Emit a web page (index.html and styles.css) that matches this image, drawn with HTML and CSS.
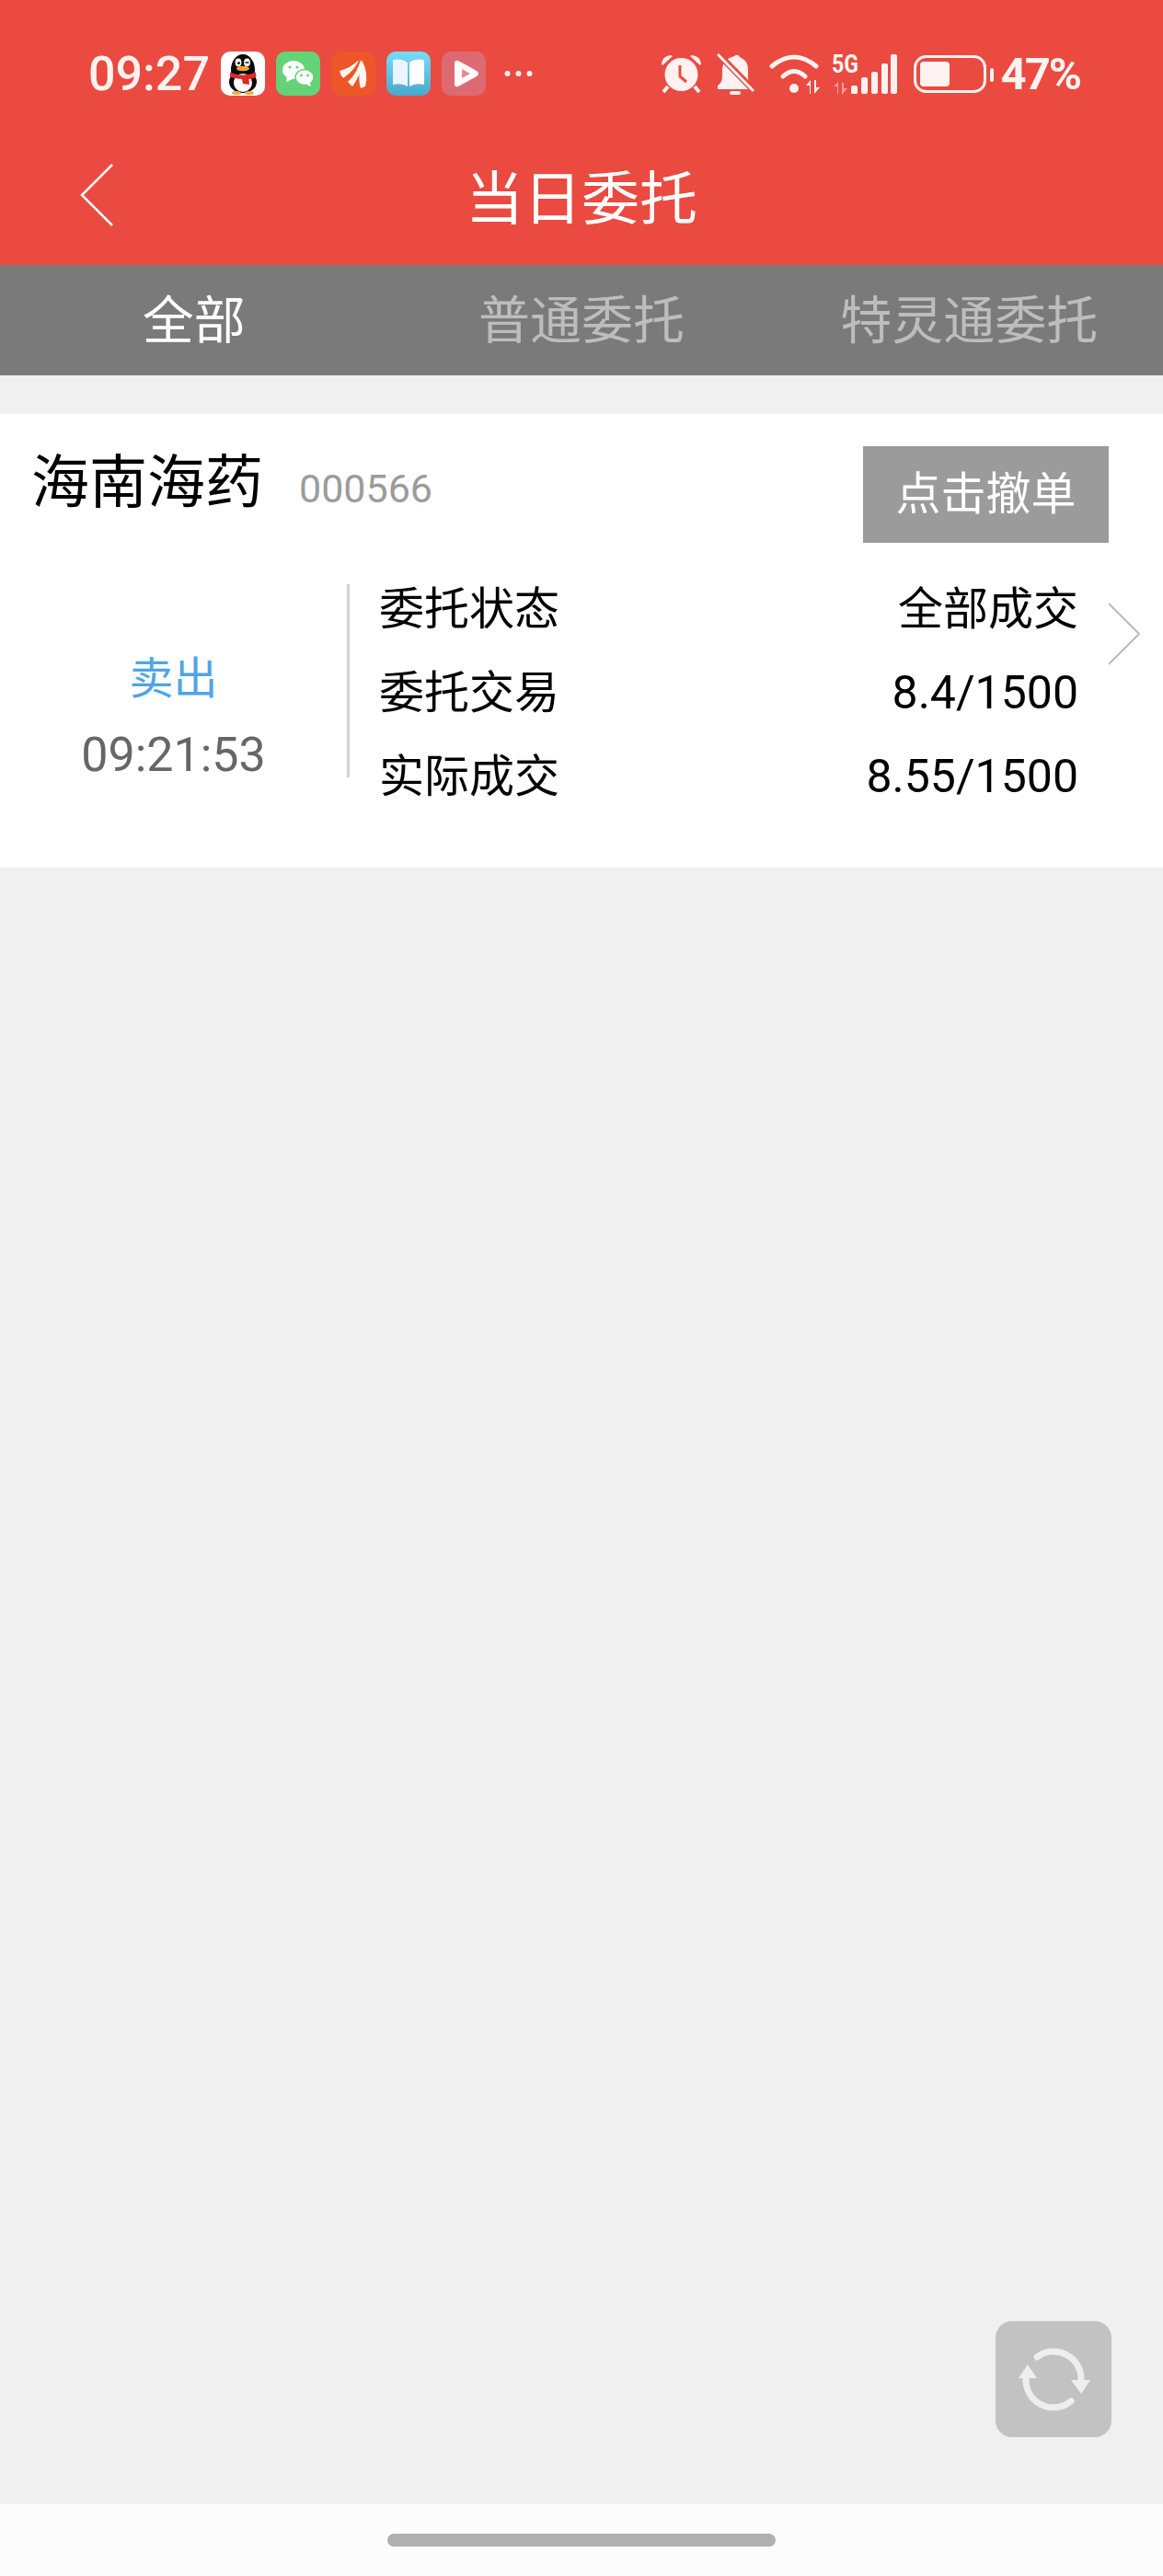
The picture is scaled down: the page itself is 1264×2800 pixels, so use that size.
FILE: index.html
```html
<!DOCTYPE html>
<html lang="zh-CN">

<head>
    <meta charset="UTF-8">
    <meta name="viewport" content="width=device-width, initial-scale=1.0">
    <title>当日委托</title>
    <link rel="stylesheet" href="styles.css">
</head>

<body>
    <div id="page">
        <header id="topBar">
            <div id="statusBar">
                <span class="clock">09:27</span>
                <div class="appIcons">
                    <svg class="appIcon" viewBox="0 0 48 48">
                        <rect width="48" height="48" rx="10" fill="#fff"/>
                        <ellipse cx="24" cy="20" rx="13" ry="17" fill="#0b0b0b"/>
                        <ellipse cx="24" cy="33" rx="15" ry="12" fill="#0b0b0b"/>
                        <ellipse cx="24" cy="34" rx="10" ry="10" fill="#fff"/>
                        <ellipse cx="19" cy="12" rx="3.4" ry="4.4" fill="#fff"/>
                        <ellipse cx="28.500" cy="12" rx="3.400" ry="4.400" fill="#fff"/>
                        <circle cx="19.500" cy="12.500" r="1.500" fill="#111"/>
                        <path d="M26.500 12h4" stroke="#111" stroke-width="1.500"/>
                        <ellipse cx="24" cy="18.500" rx="7" ry="2.800" fill="#f0a92c"/>
                        <path d="M10 22.500q14 6 28 0l.5 5q-4 2.500-8 2.500l.5 6-7-1-1-5q-7 0-13-2.500z" fill="#dc2a25"/>
                        <ellipse cx="17" cy="45" rx="5" ry="2" fill="#f0b040"/>
                        <ellipse cx="31" cy="45" rx="5" ry="2" fill="#f0b040"/>
                    </svg>
                    <svg class="appIcon" viewBox="0 0 48 48">
                        <rect width="48" height="48" rx="10" fill="#64d277"/>
                        <ellipse cx="19" cy="20" rx="12" ry="10" fill="#fff"/>
                        <path d="M12 27l-1 6 7-3z" fill="#fff"/>
                        <ellipse cx="31" cy="28" rx="10" ry="8.500" fill="#fff" stroke="#64d277" stroke-width="1.500"/>
                        <path d="M37 34l1 4-5-2z" fill="#fff"/>
                        <circle cx="15" cy="17" r="1.600" fill="#64d277"/>
                        <circle cx="23" cy="17" r="1.600" fill="#64d277"/>
                        <circle cx="27.500" cy="26" r="1.400" fill="#64d277"/>
                        <circle cx="34.500" cy="26" r="1.400" fill="#64d277"/>
                    </svg>
                    <svg class="appIcon" viewBox="0 0 48 48">
                        <rect width="48" height="48" rx="10" fill="#ec5628"/>
                        <path d="M9 21q12-3 21-12-3 10-17 20q-3-3-4-8z" fill="#fff5ef"/>
                        <path d="M18 33q10-9 14-24 3 12-9 29z" fill="#fff5ef"/>
                        <path d="M32 40q-4-12 1-31 8 14 4 29z" fill="#fff5ef"/>
                    </svg>
                    <svg class="appIcon" viewBox="0 0 48 48">
                        <defs>
                            <linearGradient id="bookBg" x1="0" y1="0" x2="0" y2="1">
                                <stop offset="0" stop-color="#78dcf8"/>
                                <stop offset="1" stop-color="#48a9cc"/>
                            </linearGradient>
                        </defs>
                        <rect width="48" height="48" rx="10" fill="url(#bookBg)"/>
                        <path d="M7 9q10-2 16 3v26q-6-4-16-2z" fill="#eaf6fb"/>
                        <path d="M41 9q-10-2-16 3v26q6-4 16-2z" fill="#fff"/>
                    </svg>
                    <svg class="appIcon" viewBox="0 0 48 48">
                        <rect width="48" height="48" rx="10" fill="#dd6a72"/>
                        <path d="M14 13q0-4 4-3l20 11q4 3 0 6l-20 11q-4 1-4-3z" fill="#fff"/>
                        <path d="M22 19v10l9-5z" fill="#e68a90"/>
                    </svg>
                </div>
                <svg class="moreDots" viewBox="0 0 31 8">
                    <circle cx="3.500" cy="4" r="3" fill="#fff2f0"/>
                    <circle cx="15.500" cy="4" r="3" fill="#fff2f0"/>
                    <circle cx="27.500" cy="4" r="3" fill="#fff2f0"/>
                </svg>
                <div class="sysIcons">
                    <svg class="alarmIcon" viewBox="0 0 45 44">
                        <circle cx="22.500" cy="23" r="18" fill="#fff2f0"/>
                        <path d="M1 11q1-8 10-9l2 1-11 10z" fill="#fff2f0"/>
                        <path d="M44 11q-1-8-10-9l-2 1 11 10z" fill="#fff2f0"/>
                        <path d="M8 36l-5 6M37 36l5 6" stroke="#fff2f0" stroke-width="4"/>
                        <path d="M21 13v12l7 6" fill="none" stroke="#ea4a40" stroke-width="3"/>
                    </svg>
                    <svg class="bellIcon" viewBox="0 0 41 45">
                        <path d="M19 3q4-3 6 1 8 3 9 12v10q0 6 5 10v3H1v-4q5-3 5-10V16q1-10 13-13z" fill="#fff2f0"/>
                        <rect x="14" y="41" width="12" height="4" rx="2" fill="#fff2f0"/>
                        <path d="M0 -1L41 41" stroke="#ea4a40" stroke-width="7"/>
                        <path d="M1 1L40 41" stroke="#fff2f0" stroke-width="3"/>
                    </svg>
                    <svg class="wifiIcon" viewBox="0 0 56 43">
                        <path d="M3 13Q27 -7 51 13" fill="none" stroke="#fff2f0" stroke-width="5" stroke-linecap="round"/>
                        <path d="M15 24Q27 13 39 24" fill="none" stroke="#fff2f0" stroke-width="5" stroke-linecap="round"/>
                        <circle cx="27" cy="37" r="5" fill="#fff2f0"/>
                        <path d="M44 43V34h-4l5-6v15zM49 28v15l6-7h-4v-8z" fill="#fff2f0"/>
                    </svg>
                    <svg class="signalIcon" viewBox="0 -8 72 53">
                        <text class="netLabel" x="0" y="21" textLength="29" lengthAdjust="spacingAndGlyphs">5G</text>
                        <path d="M6 44V36H2l5-5v13zM11 32v13l6-7h-4v-6z" fill="#f6a29b"/>
                        <rect x="21" y="35" width="7" height="9" rx="1.500" fill="#fff2f0"/>
                        <rect x="32" y="26" width="7" height="18" rx="2" fill="#fff2f0"/>
                        <rect x="43" y="20" width="7" height="24" rx="2" fill="#fff2f0"/>
                        <rect x="54" y="11" width="7" height="33" rx="2" fill="#fff2f0"/>
                        <rect x="64" y="1" width="7" height="43" rx="2" fill="#fff2f0"/>
                    </svg>
                    <svg class="batteryIcon" viewBox="0 0 87 41">
                        <rect x="1.500" y="1.500" width="76" height="38" rx="12" fill="none" stroke="#fff2f0" stroke-width="3"/>
                        <rect x="7" y="7" width="32" height="27" rx="4" fill="#fff2f0"/>
                        <rect x="83" y="14" width="4" height="15" rx="2" fill="#fff2f0"/>
                    </svg>
                    <span class="percent">47%</span>
                </div>
            </div>
            <div id="navBar">
                <svg class="backArrow" viewBox="0 0 36 68">
                    <path d="M35 1L2 34l33 33" fill="none" stroke="#fff" stroke-width="2.500"/>
                </svg>
                <h1>当日委托</h1>
            </div>
        </header>

        <nav id="tabs">
            <div class="tab active">全部</div>
            <div class="tab">普通委托</div>
            <div class="tab">特灵通委托</div>
        </nav>

        <main id="content">
            <section class="orderCard">
                <div class="orderHead">
                    <div class="stock">
                        <span class="stockName">海南海药</span>
                        <span class="stockCode">000566</span>
                    </div>
                    <button class="cancelBtn">点击撤单</button>
                </div>
                <div class="orderBody">
                    <div class="orderSide">
                        <div class="sideLabel">卖出</div>
                        <div class="sideTime">09:21:53</div>
                    </div>
                    <div class="divider"></div>
                    <div class="orderRows">
                        <div class="orderRow"><span>委托状态</span><span>全部成交</span></div>
                        <div class="orderRow"><span>委托交易</span><span class="num">8.4/1500</span></div>
                        <div class="orderRow"><span>实际成交</span><span class="num">8.55/1500</span></div>
                    </div>
                    <svg class="rowArrow" viewBox="0 0 35 68">
                        <path d="M1 1l33 33L1 67" fill="none" stroke="#bbb" stroke-width="2"/>
                    </svg>
                </div>
            </section>

            <button id="refreshBtn">
                <svg viewBox="0 0 126 126">
                    <path d="M45 39A30 30 0 0 1 93 64" fill="none" stroke="#eee" stroke-width="7" stroke-linecap="round"/>
                    <path d="M82 64h21L93 79z" fill="#eee"/>
                    <path d="M82 87A30 30 0 0 1 33 62" fill="none" stroke="#eee" stroke-width="7" stroke-linecap="round"/>
                    <path d="M25 62h20L35 47z" fill="#eee"/>
                </svg>
            </button>
        </main>

        <footer id="homeBar">
            <div class="homePill"></div>
        </footer>
    </div>
</body>

</html>
```

FILE: styles.css
```css
* {
    box-sizing: border-box;
}

body {
    margin: 0;
    padding: 0;
    background: #f0f0f0;
    font-family: Roboto, 'Noto Sans CJK SC', sans-serif;
}

svg {
    display: block;
    flex: none;
}

#page {
    display: flex;
    flex-direction: column;
    height: 2800px;
}

/* red top area */
#topBar {
    background: #ea4a40;
}

#statusBar {
    display: flex;
    align-items: center;
    height: 160px;
    padding: 0 90px 0 96px;
    color: #fff2f0;
}

.clock {
    width: 144px;
    font-size: 52px;
    font-weight: 500;
}

.appIcons {
    display: flex;
    gap: 12px;
}

.appIcon {
    width: 48px;
    height: 48px;
}

.moreDots {
    width: 31px;
    height: 8px;
    margin-left: 20px;
}

.sysIcons {
    display: flex;
    align-items: center;
    margin-left: auto;
}

.alarmIcon {
    width: 45px;
    height: 44px;
}

.bellIcon {
    width: 41px;
    height: 45px;
    margin-left: 16px;
}

.wifiIcon {
    width: 56px;
    height: 43px;
    margin-left: 16px;
}

.signalIcon {
    width: 72px;
    height: 53px;
    margin: -8px 0 0 12px;
}

.netLabel {
    font-size: 28px;
    font-weight: 700;
    fill: #fff2f0;
}

.batteryIcon {
    width: 87px;
    height: 41px;
    margin-left: 17px;
}

.percent {
    margin-left: 8px;
    font-size: 49px;
    font-weight: 700;
    letter-spacing: -2px;
}

#navBar {
    position: relative;
    height: 128px;
    padding-bottom: 28px;
    display: flex;
    justify-content: center;
    align-items: center;
}

.backArrow {
    position: absolute;
    left: 87px;
    top: 18px;
    width: 36px;
    height: 68px;
}

h1 {
    margin: 0;
    color: white;
    font-size: 63px;
    font-weight: 400;
}

/* tabs */
#tabs {
    display: flex;
    height: 120px;
    background: #7a7a7a;
    padding-bottom: 10px;
}

.tab {
    flex: 1;
    display: flex;
    justify-content: center;
    align-items: center;
    font-size: 56px;
    color: #bdbdbd;
}

.tab.active {
    color: white;
}

/* content */
#content {
    position: relative;
    flex: 1;
    padding-top: 42px;
}

.orderCard {
    background: white;
    padding: 35px 0 53px 0;
}

.orderHead {
    display: flex;
    justify-content: space-between;
    align-items: flex-start;
    padding-right: 59px;
}

.stock {
    display: flex;
    align-items: baseline;
    padding: 5px 0 0 34px;
}

.stockName {
    font-size: 63px;
    line-height: 70px;
    color: black;
}

.stockCode {
    margin-left: 39px;
    font-size: 43px;
    color: #9b9b9b;
}

.cancelBtn {
    width: 267px;
    height: 105px;
    border: none;
    padding: 0 0 10px;
    background: #9b9b9b;
    color: white;
    font-family: inherit;
    font-size: 49px;
}

.orderBody {
    display: flex;
    align-items: flex-start;
    margin-top: 24px;
}

.orderSide {
    flex: none;
    width: 377px;
    padding-top: 82px;
    text-align: center;
    line-height: 83px;
}

.sideLabel {
    font-size: 48px;
    color: #4ea5e6;
}

.sideTime {
    font-size: 52px;
    color: #666;
}

.divider {
    flex: none;
    width: 3px;
    height: 210px;
    margin-top: 21px;
    background: #d2d2d2;
}

.orderRows {
    flex: none;
    width: 760px;
    margin: 3px 0 0 32px;
}

.orderRow {
    display: flex;
    justify-content: space-between;
    height: 91px;
    line-height: 91px;
    font-size: 49px;
    color: black;
}

.num {
    font-size: 50px;
}

.rowArrow {
    width: 35px;
    height: 68px;
    margin: 41px 0 0 32px;
}

#refreshBtn {
    position: absolute;
    right: 56px;
    bottom: 73px;
    width: 126px;
    height: 126px;
    padding: 0;
    border: none;
    border-radius: 18px;
    background: #c2c2c2;
}

/* bottom bar */
#homeBar {
    height: 78px;
    background: #fcfcfc;
    display: flex;
    justify-content: center;
    padding-top: 32px;
}

.homePill {
    width: 422px;
    height: 14px;
    border-radius: 7px;
    background: #b0b0b0;
}
```
